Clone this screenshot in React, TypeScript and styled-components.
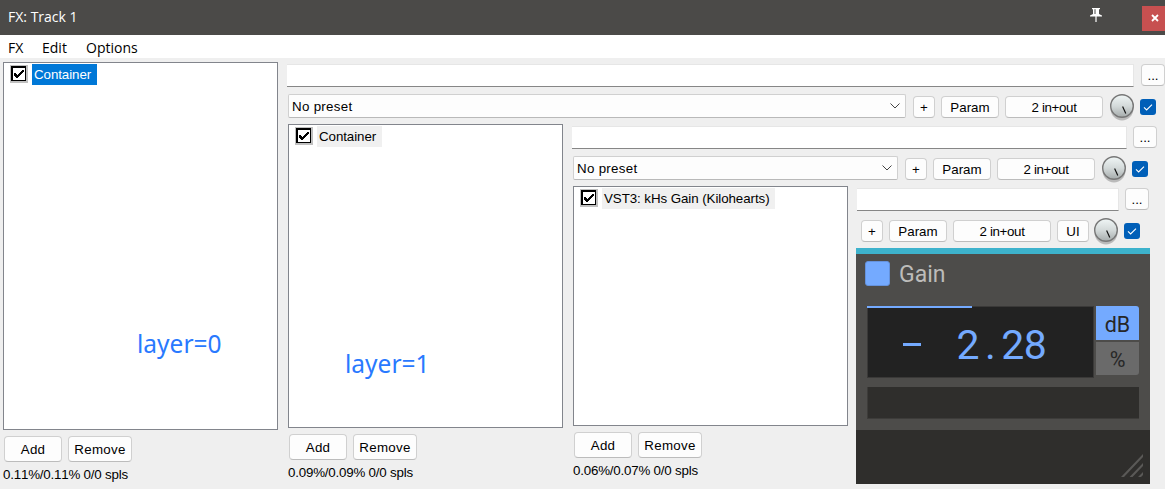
import React from "react";
import styled, { createGlobalStyle } from "styled-components";

const GlobalStyle = createGlobalStyle`
  *, *::before, *::after { box-sizing: border-box; }
  body { margin: 0; background: #efefef; overflow: hidden; }
  button { margin: 0; padding: 0; }
`;

const Window = styled.div`
  width: 1165px;
  height: 489px;
  display: flex;
  flex-direction: column;
  overflow: hidden;
  background: #efefef;
  color: #000;
  font-family: "Liberation Sans", Arial, sans-serif;
  font-size: 13.33px;
`;

const TitleBar = styled.header`
  flex: none;
  height: 35px;
  display: flex;
  align-items: flex-start;
  padding: 6px 0 0 8px;
  background: #4b4a48;
  color: #fff;
  font-family: "Open Sans", "Noto Sans", sans-serif;
`;

const Title = styled.span`
  flex: 1;
  font-size: 14px;
  line-height: 22px;
`;

const PinIcon = styled.svg`
  flex: none;
  width: 14px;
  height: 15px;
  margin: 2px 39px 0 0;
`;

const CloseButton = styled.button`
  flex: none;
  width: 23px;
  height: 25px;
  border: 0;
  background: #c75050;
  display: flex;
  align-items: center;
  justify-content: center;
  padding: 0 0 1px 2px;
`;

const MenuBar = styled.nav`
  flex: none;
  height: 23px;
  display: flex;
  gap: 18px;
  padding-left: 8px;
  background: #fff;
  font-family: "Open Sans", "Noto Sans", sans-serif;
  font-size: 14px;
  line-height: 25px;
`;

const MenuItem = styled.span<{ $width: number }>`
  width: ${(p) => p.$width}px;
  white-space: nowrap;
`;

const Body = styled.main`
  flex: 1;
  padding: 4px 0 0 3px;
`;

const Chain = styled.section`
  display: flex;
  align-items: flex-start;
`;

const ListColumn = styled.div`
  flex: none;
  width: 275px;
`;

const ListBox = styled.div<{ $height: number }>`
  height: ${(p) => p.$height}px;
  border: 1px solid #82858c;
  background: #fff;
`;

const ListItem = styled.div`
  display: flex;
  align-items: flex-start;
  gap: 4px;
  padding: 1px 0 0 6px;
`;

const ItemLabel = styled.span<{ $selected?: boolean; $width: number }>`
  width: ${(p) => p.$width}px;
  height: 21px;
  padding-left: 2px;
  line-height: 21px;
  letter-spacing: -0.07px;
  white-space: nowrap;
  background: ${(p) => (p.$selected ? "#0078d7" : "#f0f0f0")};
  color: ${(p) => (p.$selected ? "#fff" : "#000")};
`;

const BoxIcon = styled.svg`
  flex: none;
  width: 18px;
  height: 18px;
  margin-top: 1px;
`;

const LayerNote = styled.div<{ $left: number; $top: number }>`
  padding: ${(p) => p.$top}px 0 0 ${(p) => p.$left}px;
  color: #2979ff;
  font-family: "Noto Sans", sans-serif;
  font-size: 24.5px;
  line-height: 34px;
`;

const ListActions = styled.div`
  display: flex;
  gap: 6px;
  padding: 6px 0 0 1px;
`;

const Status = styled.div`
  margin-top: 4px;
  line-height: 17px;
  letter-spacing: -0.2px;
  font-kerning: none;
  white-space: nowrap;
`;

const Button = styled.button<{ $width: number; $height?: number; $spacing?: number }>`
  flex: none;
  width: ${(p) => p.$width}px;
  height: ${(p) => p.$height ?? 22}px;
  padding-top: 1px;
  border: 1px solid #d0d0d0;
  border-bottom-color: #bcbcbc;
  border-radius: 4px;
  background: #fdfdfd;
  color: #000;
  font: inherit;
  line-height: 19px;
  letter-spacing: ${(p) => p.$spacing ?? 0}px;
  white-space: nowrap;
`;

const Pane = styled.div`
  flex: 1;
  min-width: 0;
`;

const NameRow = styled.div<{ $gap: number }>`
  display: flex;
  gap: ${(p) => p.$gap}px;
  padding: 2px 0 0 9px;
`;

const NameField = styled.div`
  flex: 1;
  height: 23px;
  border: 1px solid #e6e6e6;
  border-left: 0;
  border-bottom-color: #868686;
  background: #fff;
`;

const ControlRow = styled.div`
  height: 37px;
  display: flex;
  align-items: flex-start;
  justify-content: flex-end;
  gap: 6px;
  padding: 7px 9px 0 10px;

  & > ${Button} { margin-top: 2px; }
`;

const Preset = styled.div`
  flex: 1;
  height: 24px;
  display: flex;
  align-items: center;
  justify-content: space-between;
  margin-right: 1px;
  padding: 0 4px 0 3px;
  border: 1px solid #d0d0d0;
  border-bottom-color: #b9b9b9;
  border-radius: 2px;
  background: #fdfdfd;
  letter-spacing: 0.3px;
`;

const KnobIcon = styled.svg<{ $shift: number }>`
  flex: none;
  width: 24px;
  height: 27px;
  margin-left: ${(p) => p.$shift}px;
`;

const Toggle = styled.span`
  flex: none;
  width: 16px;
  height: 16px;
  margin-top: 5px;
  border-radius: 3px;
  background: #005fb8;
  display: flex;
  align-items: center;
  justify-content: center;
`;

const Nested = styled.div`
  padding: 0 8px 0 10px;
`;

const Plugin = styled.div`
  width: 294px;
  height: 236px;
  margin-left: 8px;
  display: flex;
  flex-direction: column;
  border-top: 6px solid #3db2cc;
  background: #4d4c4a;
  font-family: Roboto, sans-serif;
`;

const PluginHeader = styled.div`
  height: 52px;
  display: flex;
  gap: 9px;
  padding: 7px 0 0 9px;
  color: #bdbcba;
  font-size: 23px;
  line-height: 27px;
`;

const Swatch = styled.span`
  width: 25px;
  height: 25px;
  border: 1px solid #6592dc;
  border-radius: 3px;
  background: #74aaff;
`;

const Readout = styled.div`
  display: flex;
  gap: 2px;
  padding: 0 11px;
`;

const Display = styled.div`
  width: 227px;
  height: 72px;
  border: 1px solid #3a3938;
  background: #222;
  color: #74aaff;
`;

const Level = styled.div`
  width: 105px;
  height: 2px;
  margin: -1px 0 0 -1px;
  background: #74aaff;
`;

const Digits = styled.div`
  display: flex;
  padding: 13px 0 0 33px;
  font-size: 41px;
  line-height: 48px;
`;

const Cell = styled.span<{ $width?: number }>`
  width: ${(p) => p.$width ?? 22.4}px;
  display: flex;
  justify-content: center;
`;

const MinusBar = styled.span`
  width: 18px;
  height: 3px;
  margin-top: 22px;
  background: #74aaff;
`;

const Units = styled.div`
  display: flex;
  flex-direction: column;
  gap: 2px;
`;

const Unit = styled.div<{ $active?: boolean }>`
  width: 43px;
  height: ${(p) => (p.$active ? 34 : 33)}px;
  border-radius: ${(p) => (p.$active ? "0 3px 0 0" : "0 0 3px 0")};
  background: ${(p) => (p.$active ? "#74aaff" : "#6a6a6a")};
  color: #272727;
  font-size: 21.5px;
  line-height: ${(p) => (p.$active ? 37 : 35)}px;
  text-align: center;
`;

const Slot = styled.div`
  height: 32px;
  margin: 9px 11px 11px;
  border: solid #3d3c3a;
  border-width: 0 0 1px 1px;
  background: #2f2e2c;
`;

const PluginFooter = styled.div`
  flex: 1;
  display: flex;
  align-items: flex-end;
  justify-content: flex-end;
  padding: 0 7px 7px;
  background: #2f2e2c;
`;

function ItemCheck() {
  return (
    <BoxIcon viewBox="0 0 18 18" shapeRendering="crispEdges">
      <rect width="18" height="18" fill="#c0c0c0" />
      <rect x="1" y="1" width="15" height="15" fill="#000" />
      <rect x="3" y="3" width="12" height="12" fill="#fff" />
      <path d="M4 8h2v1h1v1h1v-1h1v-1h1v-1h1v-1h1v-1h2v2h-1v1h-1v1h-1v1h-1v1h-1v1h-1v1h-2v-1h-1v-1h-1z" fill="#000" />
    </BoxIcon>
  );
}

function Knob({ id, shift = 0 }: { id: string; shift?: number }) {
  return (
    <KnobIcon viewBox="0 0 24 27" $shift={shift}>
      <defs>
        <linearGradient id={id} x1="0" y1="0" x2="0" y2="1">
          <stop offset="0" stopColor="#f0f6f6" />
          <stop offset="0.5" stopColor="#d4dada" />
          <stop offset="1" stopColor="#a5abab" />
        </linearGradient>
      </defs>
      <circle cx="12" cy="15" r="11.4" fill="#bababa" />
      <circle cx="12" cy="12" r="11.3" fill={`url(#${id})`} stroke="#777" strokeWidth="1.4" />
      <path d="M12.6 12.5l3.200 7" stroke="#111" strokeWidth="1.2" />
    </KnobIcon>
  );
}

function Enabled() {
  return (
    <Toggle>
      <svg width="16" height="16" viewBox="0 0 16 16" fill="none">
        <path d="M4 8.4l2.6 2.6L12 5.6" stroke="#fff" strokeWidth="1.1" />
      </svg>
    </Toggle>
  );
}

interface FxChainProps {
  name: string;
  labelWidth: number;
  height: number;
  usage: string;
  note?: { text: string; left: number; top: number };
  selected?: boolean;
  nameGap?: number;
  hasPreset?: boolean;
  id: string;
  children: React.ReactNode;
}

function FxChain({ name, labelWidth, height, usage, note, selected, nameGap = 6, hasPreset = true, id, children }: FxChainProps) {
  return (
    <Chain>
      <ListColumn>
        <ListBox $height={height}>
          <ListItem>
            <ItemCheck />
            <ItemLabel $selected={selected} $width={labelWidth}>{name}</ItemLabel>
          </ListItem>
          {note && <LayerNote $left={note.left} $top={note.top}>{note.text}</LayerNote>}
        </ListBox>
        <ListActions>
          <Button $width={58} $height={26} $spacing={0.3}>Add</Button>
          <Button $width={64} $height={26} $spacing={0.3}>Remove</Button>
        </ListActions>
        <Status>{usage}</Status>
      </ListColumn>
      <Pane>
        <NameRow $gap={nameGap}>
          <NameField />
          <Button $width={24}>...</Button>
        </NameRow>
        <ControlRow>
          {hasPreset && (
            <Preset>
              No preset
              <svg width="12" height="8" viewBox="0 0 12 8" fill="none">
                <path d="M1.5 1.5L6 6l4.5-4.5" stroke="#444" />
              </svg>
            </Preset>
          )}
          <Button $width={22}>+</Button>
          <Button $width={58}>Param</Button>
          <Button $width={98} $spacing={-0.35}>2 in+out</Button>
          {!hasPreset && <Button $width={32}>UI</Button>}
          <Knob id={id} shift={hasPreset ? 1 : -1} />
          <Enabled />
        </ControlRow>
        {children}
      </Pane>
    </Chain>
  );
}

function GainPlugin() {
  return (
    <Plugin>
      <PluginHeader>
        <Swatch />
        Gain
      </PluginHeader>
      <Readout>
        <Display>
          <Level />
          <Digits>
            <Cell><MinusBar /></Cell>
            <Cell $width={33.5} />
            <Cell>2</Cell>
            <Cell>.</Cell>
            <Cell>2</Cell>
            <Cell>8</Cell>
          </Digits>
        </Display>
        <Units>
          <Unit $active>dB</Unit>
          <Unit>%</Unit>
        </Units>
      </Readout>
      <Slot />
      <PluginFooter>
        <svg width="22" height="23" viewBox="0 0 22 23">
          <path d="M0 23L22 0v3L3 23zM8.5 23L22 9v3L11.5 23zM17 23l5-5v3l-2 2z" fill="#5a5957" />
        </svg>
      </PluginFooter>
    </Plugin>
  );
}

export default function App() {
  return (
    <Window>
      <GlobalStyle />
      <TitleBar>
        <Title>FX: Track 1</Title>
        <PinIcon viewBox="0 0 14 15" fill="#fff">
          <path d="M3 0h8v1.200H10V6l3 1.500V8.500H7.600V14H6.400V8.500H1V7.500L4 6V1.200H3z" />
          <path d="M6 1.200v4.800" stroke="#4b4a48" strokeWidth="1" />
        </PinIcon>
        <CloseButton>
          <svg width="8" height="8" viewBox="0 0 8 8">
            <path d="M1 1l6 6M7 1L1 7" stroke="#fff" strokeWidth="1.8" />
          </svg>
        </CloseButton>
      </TitleBar>
      <MenuBar>
        <MenuItem $width={16}>FX</MenuItem>
        <MenuItem $width={26}>Edit</MenuItem>
        <MenuItem $width={60}>Options</MenuItem>
      </MenuBar>
      <Body>
        <FxChain
          id="knob-outer"
          name="Container"
          selected
          labelWidth={65}
          height={368}
          usage="0.11%/0.11% 0/0 spls"
          note={{ text: "layer=0", left: 133, top: 242 }}
          nameGap={7}
        >
          <Nested>
            <FxChain
              id="knob-middle"
              name="Container"
              labelWidth={65}
              height={304}
              usage="0.09%/0.09% 0/0 spls"
              note={{ text: "layer=1", left: 56, top: 200 }}
            >
              <Nested>
                <FxChain
                  id="knob-inner"
                  name="VST3: kHs Gain (Kilohearts)"
                  labelWidth={173}
                  height={240}
                  usage="0.06%/0.07% 0/0 spls"
                  hasPreset={false}
                >
                  <GainPlugin />
                </FxChain>
              </Nested>
            </FxChain>
          </Nested>
        </FxChain>
      </Body>
    </Window>
  );
}
